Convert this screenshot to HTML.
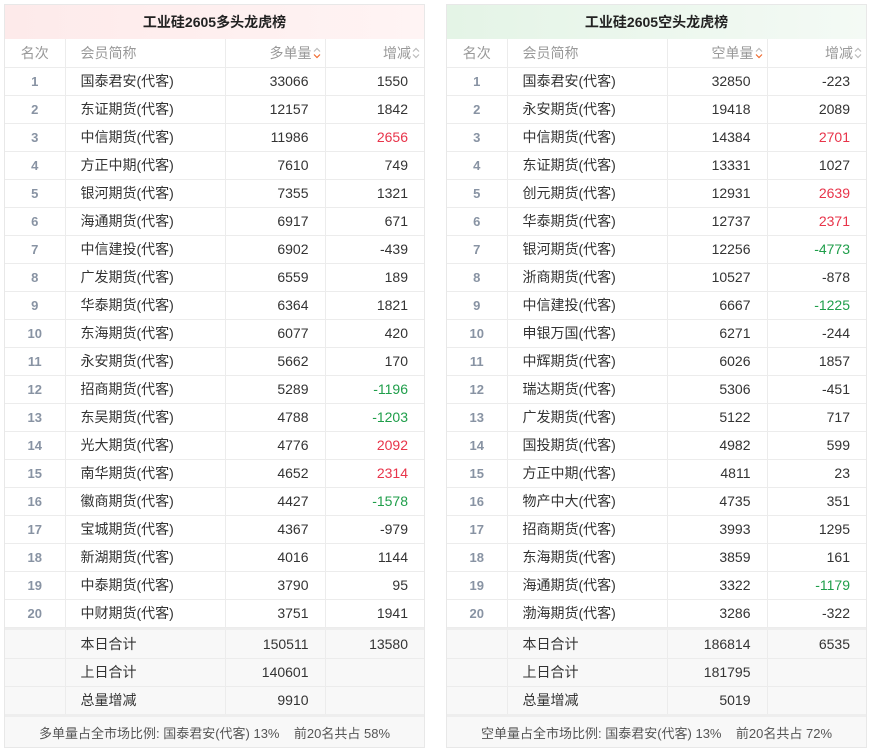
<!DOCTYPE html>
<html><head><meta charset="utf-8"><style>
*{margin:0;padding:0;box-sizing:border-box}
body{width:872px;height:755px;background:#fff;font-family:"Liberation Sans","Noto Sans CJK SC",sans-serif;font-size:14px;color:#333;position:relative;overflow:hidden}
.p{position:absolute;top:4px;width:421px;border:1px solid #e8e8e8;border-bottom:none}
.t{height:34px;line-height:34px;text-align:center;font-weight:bold;font-size:14px;color:#222}
.l .t{background:linear-gradient(90deg,#fdeaea,#fff4f4)}
.r .t{background:linear-gradient(90deg,#e4f4e6,#f4faf5)}
table{border-collapse:collapse;table-layout:fixed;width:100%}
td{height:28px;border-right:1px solid #ececec;border-bottom:1px solid #ececec;white-space:nowrap}
td:last-child{border-right:none}
.h td{color:#999;font-size:14px}
.c1{text-align:center;font-weight:bold;color:#8893a3;font-size:13px}
.h .c1{font-weight:normal;color:#999;font-size:14px}
.c2{padding-left:15px}
.n{text-align:right;padding-right:16px}
.red{color:#e8344a}.grn{color:#1f9e4a}
svg{vertical-align:-1px;margin-left:1px}
.gap td{height:3px;background:#eee;border:none}
.s td{background:#f8f8f8}
.f{height:34px;line-height:34px;text-align:center;background:#f8f8f8;border-top:3px solid #eee;border-bottom:1px solid #e8e8e8;font-size:13px;color:#555}
</style></head><body>
<div class="p l" style="left:4px">
<div class="t">工业硅2605多头龙虎榜</div>
<table>
<colgroup><col style="width:60px"><col style="width:160px"><col style="width:100px"><col></colgroup>
<tr class="h"><td class="c1">名次</td><td class="c2">会员简称</td><td class="n" style="padding-right:4px">多单量<svg width="8" height="12" viewBox="0 0 8 12"><path d="M1 4.5L4 1.5L7 4.5" fill="none" stroke="#bbb" stroke-width="1.2"/><path d="M1 7.5L4 10.5L7 7.5" fill="none" stroke="#f06a2e" stroke-width="1.2"/></svg></td><td class="n" style="padding-right:4px">增减<svg width="8" height="12" viewBox="0 0 8 12"><path d="M1 4.5L4 1.5L7 4.5M1 7.5L4 10.5L7 7.5" fill="none" stroke="#bbb" stroke-width="1.2"/></svg></td></tr>
<tr><td class="c1">1</td><td class="c2">国泰君安(代客)</td><td class="n">33066</td><td class="n">1550</td></tr>
<tr><td class="c1">2</td><td class="c2">东证期货(代客)</td><td class="n">12157</td><td class="n">1842</td></tr>
<tr><td class="c1">3</td><td class="c2">中信期货(代客)</td><td class="n">11986</td><td class="n red">2656</td></tr>
<tr><td class="c1">4</td><td class="c2">方正中期(代客)</td><td class="n">7610</td><td class="n">749</td></tr>
<tr><td class="c1">5</td><td class="c2">银河期货(代客)</td><td class="n">7355</td><td class="n">1321</td></tr>
<tr><td class="c1">6</td><td class="c2">海通期货(代客)</td><td class="n">6917</td><td class="n">671</td></tr>
<tr><td class="c1">7</td><td class="c2">中信建投(代客)</td><td class="n">6902</td><td class="n">-439</td></tr>
<tr><td class="c1">8</td><td class="c2">广发期货(代客)</td><td class="n">6559</td><td class="n">189</td></tr>
<tr><td class="c1">9</td><td class="c2">华泰期货(代客)</td><td class="n">6364</td><td class="n">1821</td></tr>
<tr><td class="c1">10</td><td class="c2">东海期货(代客)</td><td class="n">6077</td><td class="n">420</td></tr>
<tr><td class="c1">11</td><td class="c2">永安期货(代客)</td><td class="n">5662</td><td class="n">170</td></tr>
<tr><td class="c1">12</td><td class="c2">招商期货(代客)</td><td class="n">5289</td><td class="n grn">-1196</td></tr>
<tr><td class="c1">13</td><td class="c2">东吴期货(代客)</td><td class="n">4788</td><td class="n grn">-1203</td></tr>
<tr><td class="c1">14</td><td class="c2">光大期货(代客)</td><td class="n">4776</td><td class="n red">2092</td></tr>
<tr><td class="c1">15</td><td class="c2">南华期货(代客)</td><td class="n">4652</td><td class="n red">2314</td></tr>
<tr><td class="c1">16</td><td class="c2">徽商期货(代客)</td><td class="n">4427</td><td class="n grn">-1578</td></tr>
<tr><td class="c1">17</td><td class="c2">宝城期货(代客)</td><td class="n">4367</td><td class="n">-979</td></tr>
<tr><td class="c1">18</td><td class="c2">新湖期货(代客)</td><td class="n">4016</td><td class="n">1144</td></tr>
<tr><td class="c1">19</td><td class="c2">中泰期货(代客)</td><td class="n">3790</td><td class="n">95</td></tr>
<tr><td class="c1">20</td><td class="c2">中财期货(代客)</td><td class="n">3751</td><td class="n">1941</td></tr>
<tr class="gap"><td colspan="4"></td></tr>
<tr class="s"><td></td><td class="c2">本日合计</td><td class="n">150511</td><td class="n">13580</td></tr>
<tr class="s"><td></td><td class="c2">上日合计</td><td class="n">140601</td><td></td></tr>
<tr class="s"><td style="border-bottom:none"></td><td class="c2" style="border-bottom:none">总量增减</td><td class="n" style="border-bottom:none">9910</td><td style="border-bottom:none"></td></tr>
</table>
<div class="f">多单量占全市场比例: 国泰君安(代客) 13%&nbsp;&nbsp;&nbsp;&nbsp;前20名共占 58%</div>
</div>

<div class="p r" style="left:446px">
<div class="t">工业硅2605空头龙虎榜</div>
<table>
<colgroup><col style="width:60px"><col style="width:160px"><col style="width:100px"><col></colgroup>
<tr class="h"><td class="c1">名次</td><td class="c2">会员简称</td><td class="n" style="padding-right:4px">空单量<svg width="8" height="12" viewBox="0 0 8 12"><path d="M1 4.5L4 1.5L7 4.5" fill="none" stroke="#bbb" stroke-width="1.2"/><path d="M1 7.5L4 10.5L7 7.5" fill="none" stroke="#f06a2e" stroke-width="1.2"/></svg></td><td class="n" style="padding-right:4px">增减<svg width="8" height="12" viewBox="0 0 8 12"><path d="M1 4.5L4 1.5L7 4.5M1 7.5L4 10.5L7 7.5" fill="none" stroke="#bbb" stroke-width="1.2"/></svg></td></tr>
<tr><td class="c1">1</td><td class="c2">国泰君安(代客)</td><td class="n">32850</td><td class="n">-223</td></tr>
<tr><td class="c1">2</td><td class="c2">永安期货(代客)</td><td class="n">19418</td><td class="n">2089</td></tr>
<tr><td class="c1">3</td><td class="c2">中信期货(代客)</td><td class="n">14384</td><td class="n red">2701</td></tr>
<tr><td class="c1">4</td><td class="c2">东证期货(代客)</td><td class="n">13331</td><td class="n">1027</td></tr>
<tr><td class="c1">5</td><td class="c2">创元期货(代客)</td><td class="n">12931</td><td class="n red">2639</td></tr>
<tr><td class="c1">6</td><td class="c2">华泰期货(代客)</td><td class="n">12737</td><td class="n red">2371</td></tr>
<tr><td class="c1">7</td><td class="c2">银河期货(代客)</td><td class="n">12256</td><td class="n grn">-4773</td></tr>
<tr><td class="c1">8</td><td class="c2">浙商期货(代客)</td><td class="n">10527</td><td class="n">-878</td></tr>
<tr><td class="c1">9</td><td class="c2">中信建投(代客)</td><td class="n">6667</td><td class="n grn">-1225</td></tr>
<tr><td class="c1">10</td><td class="c2">申银万国(代客)</td><td class="n">6271</td><td class="n">-244</td></tr>
<tr><td class="c1">11</td><td class="c2">中辉期货(代客)</td><td class="n">6026</td><td class="n">1857</td></tr>
<tr><td class="c1">12</td><td class="c2">瑞达期货(代客)</td><td class="n">5306</td><td class="n">-451</td></tr>
<tr><td class="c1">13</td><td class="c2">广发期货(代客)</td><td class="n">5122</td><td class="n">717</td></tr>
<tr><td class="c1">14</td><td class="c2">国投期货(代客)</td><td class="n">4982</td><td class="n">599</td></tr>
<tr><td class="c1">15</td><td class="c2">方正中期(代客)</td><td class="n">4811</td><td class="n">23</td></tr>
<tr><td class="c1">16</td><td class="c2">物产中大(代客)</td><td class="n">4735</td><td class="n">351</td></tr>
<tr><td class="c1">17</td><td class="c2">招商期货(代客)</td><td class="n">3993</td><td class="n">1295</td></tr>
<tr><td class="c1">18</td><td class="c2">东海期货(代客)</td><td class="n">3859</td><td class="n">161</td></tr>
<tr><td class="c1">19</td><td class="c2">海通期货(代客)</td><td class="n">3322</td><td class="n grn">-1179</td></tr>
<tr><td class="c1">20</td><td class="c2">渤海期货(代客)</td><td class="n">3286</td><td class="n">-322</td></tr>
<tr class="gap"><td colspan="4"></td></tr>
<tr class="s"><td></td><td class="c2">本日合计</td><td class="n">186814</td><td class="n">6535</td></tr>
<tr class="s"><td></td><td class="c2">上日合计</td><td class="n">181795</td><td></td></tr>
<tr class="s"><td style="border-bottom:none"></td><td class="c2" style="border-bottom:none">总量增减</td><td class="n" style="border-bottom:none">5019</td><td style="border-bottom:none"></td></tr>
</table>
<div class="f">空单量占全市场比例: 国泰君安(代客) 13%&nbsp;&nbsp;&nbsp;&nbsp;前20名共占 72%</div>
</div>
</body></html>
